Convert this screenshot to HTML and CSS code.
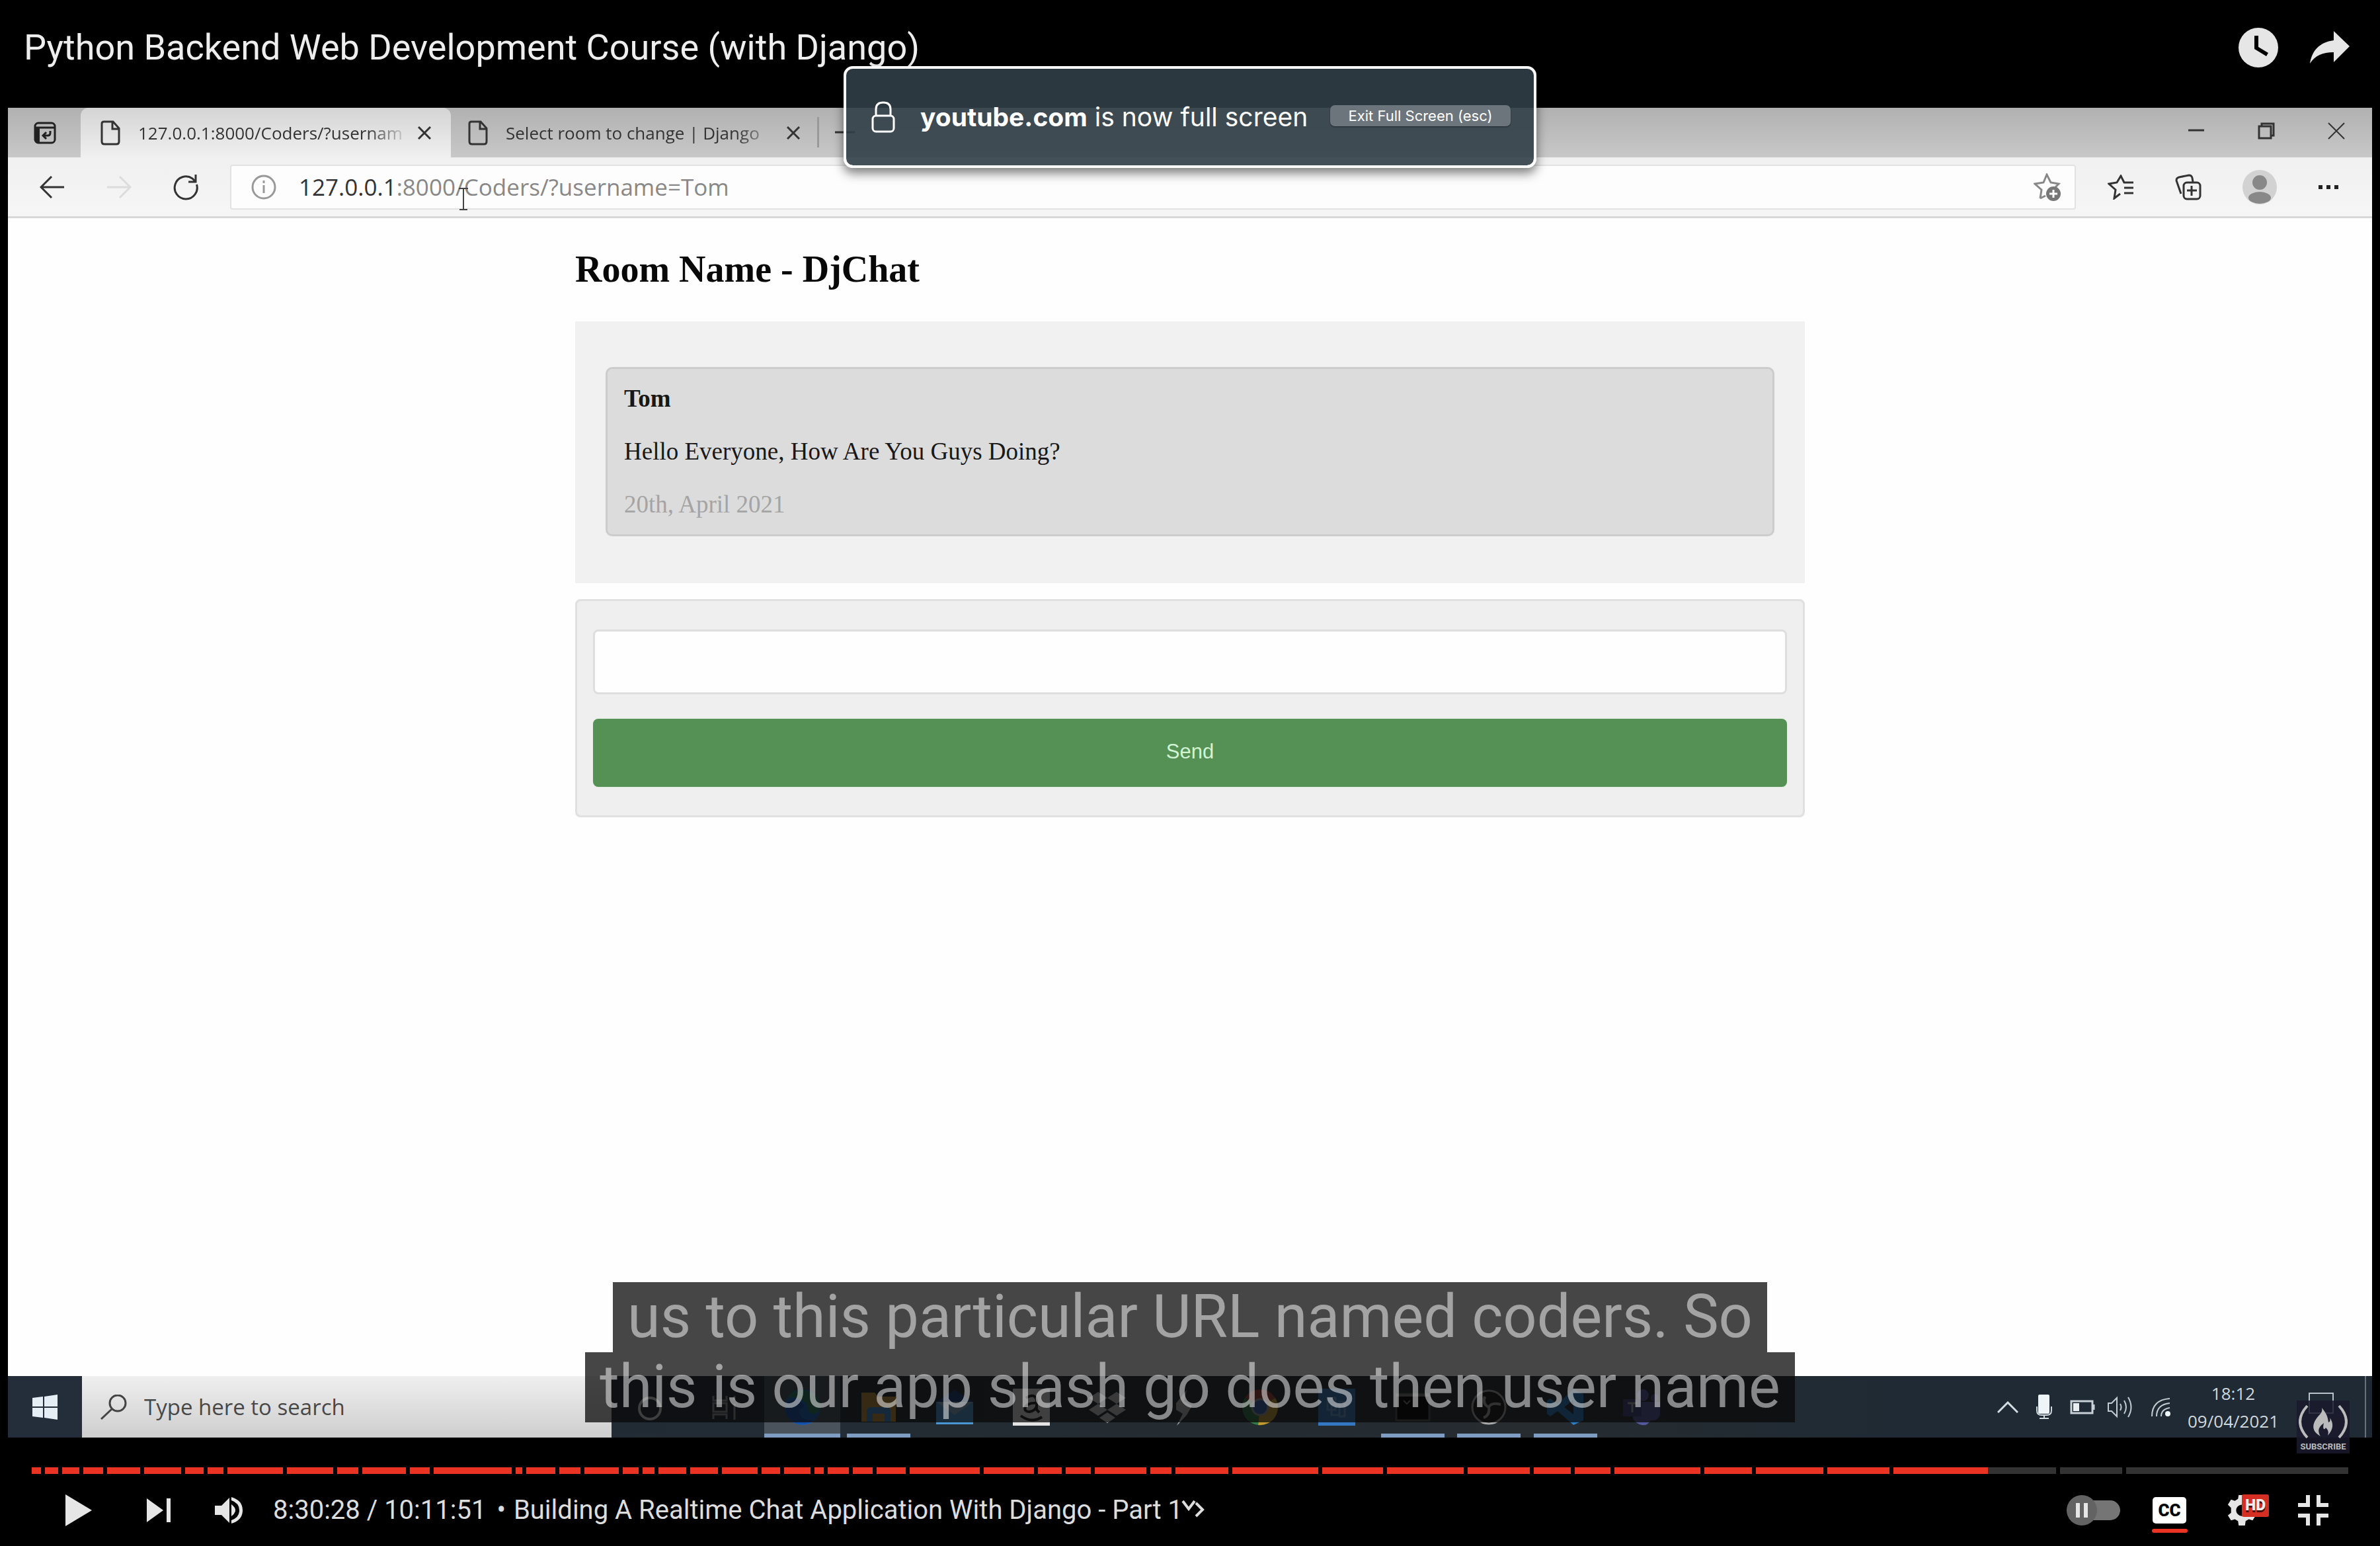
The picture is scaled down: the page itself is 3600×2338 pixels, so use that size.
FILE: index.html
```html
<!DOCTYPE html>
<html lang="en">
<head>
<meta charset="utf-8">
<title>Python Backend Web Development Course (with Django)</title>
<link rel="stylesheet" href="styles.css">
</head>
<body>
<div class="player">
  <header class="player-header">
    <h1 class="video-title">Python Backend Web Development Course (with Django)</h1>
    <button class="icon-button" aria-label="Watch later"><svg width="60" height="60" viewBox="0 0 60 60"><circle cx="30" cy="30" r="30" fill="#e6e6e6"/><path d="M24 12v20l18 11 3-5-15-9V12z" fill="#000"/></svg></button>
    <button class="icon-button" aria-label="Share"><svg width="60" height="60" viewBox="0 0 60 60"><path d="M60 28 36 5v14C14 22 3 35 0 54c8-12 19-17 36-17v15z" fill="#e6e6e6"/></svg></button>
  </header>

  <main class="video">
    <div class="tab-strip">
      <button class="tab-actions" aria-label="Tab actions"><svg width="34" height="34" viewBox="0 0 34 34"><rect x="2" y="2" width="30" height="30" rx="5" fill="none" stroke="#222" stroke-width="3"/><path d="M2 9h30" stroke="#222" stroke-width="3"/><path d="M2 9h7v23H6q-4 0-4-4z" fill="#222"/><path d="M25 14v3q0 4-4 4h-6m4-5-5 5 5 5" fill="none" stroke="#222" stroke-width="3"/></svg></button>
      <div class="tab tab-active">
        <svg class="page-icon" width="30" height="38" viewBox="0 0 30 38"><path d="M5 2h14l9 10v20q0 4-4 4H6q-4 0-4-4V5q0-3 3-3zM18 2v11h10" fill="none" stroke="#333" stroke-width="3"/></svg>
        <span class="tab-title">127.0.0.1:8000/Coders/?usernam</span>
        <button class="tab-close" aria-label="Close tab"><svg width="20" height="20" viewBox="0 0 20 20"><path d="m1 1 18 18M19 1 1 19" stroke="#333" stroke-width="3"/></svg></button>
      </div>
      <div class="tab">
        <svg class="page-icon" width="30" height="38" viewBox="0 0 30 38"><path d="M5 2h14l9 10v20q0 4-4 4H6q-4 0-4-4V5q0-3 3-3zM18 2v11h10" fill="none" stroke="#333" stroke-width="3"/></svg>
        <span class="tab-title">Select room to change | Django</span>
        <button class="tab-close" aria-label="Close tab"><svg width="20" height="20" viewBox="0 0 20 20"><path d="m1 1 18 18M19 1 1 19" stroke="#333" stroke-width="3"/></svg></button>
      </div>
      <button class="new-tab" aria-label="New tab"><svg width="30" height="30" viewBox="0 0 30 30"><path d="M0 15h30M15 0v30" stroke="#333" stroke-width="3"/></svg></button>
      <div class="window-controls">
        <button aria-label="Minimize"><svg width="26" height="26" viewBox="0 0 26 26"><path d="M1 12h24" stroke="#333" stroke-width="3"/></svg></button>
        <button aria-label="Restore"><svg width="26" height="26" viewBox="0 0 26 26"><path d="M2 6h18v18H2zM6 6V2h18v18h-4" fill="none" stroke="#333" stroke-width="3"/></svg></button>
        <button aria-label="Close"><svg width="26" height="26" viewBox="0 0 26 26"><path d="m1 1 24 24M25 1 1 25" stroke="#333" stroke-width="2"/></svg></button>
      </div>
    </div>

    <div class="toolbar">
      <div class="nav-buttons">
        <button aria-label="Back"><svg width="38" height="34" viewBox="0 0 38 34"><path d="M37 17H2M18 1 2 17l16 16" fill="none" stroke="#333" stroke-width="3"/></svg></button>
        <button aria-label="Forward"><svg width="38" height="34" viewBox="0 0 38 34"><path d="M1 17h35M20 1l16 16-16 16" fill="none" stroke="#dcdcdc" stroke-width="3"/></svg></button>
        <button aria-label="Reload"><svg width="38" height="40" viewBox="0 0 38 40"><path d="M35.500 16A17 17 0 1 1 29 7l4 4M34 1v11H23" fill="none" stroke="#333" stroke-width="3"/></svg></button>
      </div>
      <div class="address-bar">
        <svg width="38" height="38" viewBox="0 0 38 38"><circle cx="19" cy="19" r="17" fill="none" stroke="#999" stroke-width="3"/><path d="M19 16v12M19 9v4" stroke="#999" stroke-width="3"/></svg>
        <div class="url" role="textbox" aria-label="Address"><span class="url-host">127.0.0.1</span>:8000/Coders/?username=Tom</div>
        <button aria-label="Add to favorites"><svg width="42" height="42" viewBox="0 0 42 42"><path d="M10 38 12 25 2 16l13-2 5-12 6 12 12 2-5 5M10 38l8-4" fill="none" stroke="#888" stroke-width="3"/><circle cx="30" cy="31" r="11" fill="#777"/><path d="M30 25v12M24 31h12" stroke="#fff" stroke-width="3"/></svg></button>
        <svg class="text-cursor" width="16" height="36" viewBox="0 0 16 36"><path d="M1 2h14M8 2v32M2 34h12" stroke="#444" stroke-width="2"/></svg>
      </div>
      <div class="browser-actions">
        <button aria-label="Favorites"><svg width="40" height="38" viewBox="0 0 40 38"><path d="m19 29-9 7 2-13L2 14l12-2 6-10 5 10h14M25 20h14M25 28h14" fill="none" stroke="#333" stroke-width="3"/></svg></button>
        <button aria-label="Collections"><svg width="40" height="40" viewBox="0 0 40 40"><path d="M9 30 2 10q0-4 4-5l15-3q4 0 5 4l1 6" fill="none" stroke="#333" stroke-width="3"/><rect x="13" y="13" width="25" height="25" rx="5" fill="none" stroke="#333" stroke-width="3"/><path d="M25 18v15M18 25h15" stroke="#333" stroke-width="3"/></svg></button>
        <button aria-label="Profile"><svg width="52" height="52" viewBox="0 0 52 52"><circle cx="26" cy="26" r="26" fill="#d2d2d2"/><circle cx="26" cy="19" r="11" fill="#888"/><ellipse cx="26" cy="42" rx="17" ry="9" fill="#888"/></svg></button>
        <button aria-label="Settings and more"><svg width="32" height="8" viewBox="0 0 32 8"><path d="M1 1h6v6H1zM13 1h6v6h-6zM25 1h6v6h-6z" fill="#222"/></svg></button>
      </div>
    </div>

    <section class="page">
      <div class="chat">
        <h2 class="room-name">Room Name - DjChat</h2>
        <div class="chat-log">
          <article class="message">
            <b>Tom</b>
            <p>Hello Everyone, How Are You Guys Doing?</p>
            <time>20th, April 2021</time>
          </article>
        </div>
        <form class="chat-form">
          <input type="text" aria-label="Message">
          <button type="button">Send</button>
        </form>
      </div>
    </section>

    <div class="taskbar">
      <button class="start" aria-label="Start"><svg width="38" height="38" viewBox="0 0 38 38"><path d="m0 5 16-2v15H0zM18 3l20-3v18H18zM0 20h16v15L0 33zM18 20h20v18l-20-3z" fill="#e6eef5"/></svg></button>
      <label class="search">
        <svg width="40" height="38" viewBox="0 0 40 38"><circle cx="26" cy="13" r="12" fill="none" stroke="#444" stroke-width="3"/><path d="M17 22 1 37" stroke="#444" stroke-width="3"/></svg>
        <input type="text" placeholder="Type here to search" aria-label="Type here to search">
      </label>
      <div class="apps">
        <span class="app"><svg width="56" height="56" viewBox="0 0 56 56"><circle cx="28" cy="30" r="16" fill="none" stroke="#ddd" stroke-width="4"/></svg></span>
        <span class="app"><svg width="56" height="56" viewBox="0 0 56 56"><path d="M9 11v7h20v-7M9 46v-7h20v7M9 22h20v13H9zM41 11v6M41 23v24" fill="none" stroke="#999" stroke-width="3"/></svg></span>
        <span class="app app-open app-focused"><svg width="56" height="56" viewBox="0 0 56 56"><circle cx="28" cy="28" r="27" fill="#1464c0"/><path d="M5 14C20-6 52 0 55 28c0 10-16 14-19 4 2-12-15-22-31-18z" fill="#2a7a60"/><path d="M2 24c10-13 28-6 28 4-14 4-6 22 14 20C28 62 0 52 2 24z" fill="#1450a8"/></svg></span>
        <span class="app app-open"><svg width="56" height="56" viewBox="0 0 56 56"><path d="M2 6h20l5 6h27v38H2z" fill="#c09038"/><path d="M10 50V34q0-6 6-6h24q6 0 6 6v16h-9V38H19v12z" fill="#3c8cd0"/></svg></span>
        <span class="app"><svg width="56" height="56" viewBox="0 0 56 56"><path d="M0 20 28 2l28 18v34H0z" fill="#1a3f7c"/><path d="M0 20h56v34H0z" fill="#4a96d2"/><path d="m0 20 28 20 28-20z" fill="#88a8c8"/></svg></span>
        <span class="app"><svg width="56" height="56" viewBox="0 0 56 56"><path d="M0 0h56v56H0z" fill="#e4e4e4"/><path d="M20 14q14-8 16 4v14l4 4M36 22c-20-2-22 14-11 13q8-1 11-8M12 41q16 12 32 2" fill="none" stroke="#222" stroke-width="4"/></svg></span>
        <span class="app"><svg width="56" height="56" viewBox="0 0 56 56"><path d="m14 5 14 9-14 9L0 14zM42 5l14 9-14 9-14-9zM14 23l14 9-14 9L0 32zM42 23l14 9-14 9-14-9zM28 36l12 8-12 8-12-8z" fill="#ccc"/></svg></span>
        <span class="app"><svg width="56" height="56" viewBox="0 0 56 56"><path d="M32 2 16 22l0 10 10 6-9 18 15-16 8-14-12-7z" fill="#bbb"/></svg></span>
        <span class="app"><svg width="56" height="56" viewBox="0 0 56 56"><path d="M28 28 5 14a27 27 0 0 1 46 0z" fill="#a04030"/><path d="M28 28 5 14a27 27 0 0 0 20 41z" fill="#2f7a45"/><path d="M28 28 51 14a27 27 0 0 1-26 41z" fill="#c09a30"/><circle cx="28" cy="28" r="12" fill="#3a60b0" stroke="#999" stroke-width="3"/></svg></span>
        <span class="app"><svg width="56" height="56" viewBox="0 0 56 56"><path d="M0 0h56v56H0z" fill="#3478c4"/><path d="M14 14h12v18H14zM20 24h12v16H20zM32 20h8v22h-8z" fill="none" stroke="#6a9cd0" stroke-width="3"/></svg></span>
        <span class="app app-open"><svg width="56" height="56" viewBox="0 0 56 56"><path d="M3 8h50v40H3z" fill="#000" stroke="#555" stroke-width="3"/><path d="M3 10h50" stroke="#777" stroke-width="4"/><path d="m14 18 5 5 5-5" fill="none" stroke="#777" stroke-width="2"/></svg></span>
        <span class="app app-open"><svg width="56" height="56" viewBox="0 0 56 56"><circle cx="28" cy="28" r="25" fill="#181818" stroke="#aaa" stroke-width="3"/><path d="M22 12q-4 12 6 16 4-8 18-4M28 28q2 12-8 16" fill="none" stroke="#aaa" stroke-width="4"/></svg></span>
        <span class="app app-open"><svg width="56" height="56" viewBox="0 0 56 56"><path d="M40 1 55 8v40l-15 7L16 34 5 42 0 38V18l5-3 11 8zM40 17 26 28l14 11z" fill="#2a80c8" fill-rule="evenodd"/></svg></span>
        <span class="app"><svg width="56" height="56" viewBox="0 0 56 56"><circle cx="30" cy="10" r="9" fill="#565a9c"/><circle cx="48" cy="14" r="6" fill="#44488c"/><path d="M14 20h42v20q-4 10-14 8-6 9-14 7-14-4-14-16z" fill="#54589c"/><path d="M0 16h28v26H0z" fill="#3c4080"/><path d="M7 22h14M14 22v14" stroke="#aaa" stroke-width="3"/></svg></span>
      </div>
      <div class="tray">
        <svg width="32" height="18" viewBox="0 0 32 18"><path d="m1 17 15-15 15 15" fill="none" stroke="#d5dde2" stroke-width="3"/></svg>
        <svg width="26" height="38" viewBox="0 0 26 38"><rect x="4" width="17" height="29" rx="2" fill="#eef4f8"/><path d="M2 18v6q0 7 7 7h8q7 0 7-7v-6M13 31v5M6 36h14" fill="none" stroke="#cfd8dc" stroke-width="2"/></svg>
        <svg class="battery" width="38" height="22" viewBox="0 0 38 22"><path d="M2 2h32v18H2zM36 7v8" fill="none" stroke="#c8d0d5" stroke-width="3"/><path d="M5 5h9v12H5z" fill="#e8eef2"/></svg>
        <svg width="40" height="34" viewBox="0 0 40 34"><path d="M2 11h5l8-8v28l-8-8H2zM20 12q3 5 0 10M26 7q6 10 0 20M32 2q9 15 0 30" fill="none" stroke="#c4ccd1" stroke-width="2"/></svg>
        <svg width="30" height="30" viewBox="0 0 30 30"><path d="M2 29Q2 4 29 2M9 29Q9 11 29 9M16 29Q16 18 29 16" fill="none" stroke="#c4ccd1" stroke-width="2"/><circle cx="26" cy="25" r="4" fill="#eef4f8"/></svg>
        <time class="clock"><span>18:12</span><span>09/04/2021</span></time>
        <svg class="action-center" width="40" height="36" viewBox="0 0 40 36"><path d="M2 2h36v30H2z" fill="none" stroke="#b8c2c8" stroke-width="2"/></svg>
        <button class="show-desktop" aria-label="Show desktop"></button>
      </div>
      <a class="watermark" href="#"><svg width="74" height="52" viewBox="0 0 74 52"><path d="M13 2Q-9 26 13 50M61 2Q83 26 61 50" fill="none" stroke="#bbb" stroke-width="4"/><path d="M35 5c8 10 9 14 10 22 3-1 3-4 2-7 6 8 6 17-3 27 2-6 0-9-3-12-3 5-5 1-3-7-6 5-11 10-5 20C15 38 23 24 33 14c2-3 3-5 2-9z" fill="#bbb"/></svg>SUBSCRIBE</a>
    </div>

    <div class="captions"><span>us to this particular URL named coders. So</span><span>this is our app slash go does then user name</span></div>
  </main>

  <footer class="controls">
    <div class="progress" role="slider" aria-label="Seek" aria-valuemin="0" aria-valuemax="36711" aria-valuenow="30628" tabindex="0"><i style="flex-grow:14"></i><i style="flex-grow:20"></i><i style="flex-grow:26"></i><i style="flex-grow:30"></i><i style="flex-grow:50"></i><i style="flex-grow:56"></i><i style="flex-grow:28"></i><i style="flex-grow:24"></i><i style="flex-grow:84"></i><i style="flex-grow:70"></i><i style="flex-grow:32"></i><i style="flex-grow:66"></i><i style="flex-grow:30"></i><i style="flex-grow:118"></i><i style="flex-grow:10"></i><i style="flex-grow:44"></i><i style="flex-grow:32"></i><i style="flex-grow:52"></i><i style="flex-grow:24"></i><i style="flex-grow:18"></i><i style="flex-grow:42"></i><i style="flex-grow:42"></i><i style="flex-grow:54"></i><i style="flex-grow:28"></i><i style="flex-grow:40"></i><i style="flex-grow:14"></i><i style="flex-grow:32"></i><i style="flex-grow:30"></i><i style="flex-grow:44"></i><i style="flex-grow:106"></i><i style="flex-grow:76"></i><i style="flex-grow:36"></i><i style="flex-grow:38"></i><i style="flex-grow:78"></i><i style="flex-grow:32"></i><i style="flex-grow:80"></i><i style="flex-grow:130"></i><i style="flex-grow:92"></i><i style="flex-grow:116"></i><i style="flex-grow:94"></i><i style="flex-grow:56"></i><i style="flex-grow:54"></i><i style="flex-grow:130"></i><i style="flex-grow:72"></i><i style="flex-grow:102"></i><i style="flex-grow:94"></i><i class="playing" style="flex-grow:246"></i><i class="unplayed" style="flex-grow:94"></i><i class="unplayed" style="flex-grow:336"></i></div>
    <div class="control-row">
      <button class="play" aria-label="Play"><svg width="40" height="48" viewBox="0 0 40 48"><path d="m0 0 40 24L0 48z" fill="#e6e6e6"/></svg></button>
      <button class="next" aria-label="Next"><svg width="36" height="36" viewBox="0 0 36 36"><path d="m0 0 25 18L0 36zM30 0h6v36h-6z" fill="#e6e6e6"/></svg></button>
      <button class="volume" aria-label="Mute"><svg width="42" height="42" viewBox="0 0 42 42"><path d="M0 14h10L22 2v38L10 28H0z" fill="#e6e6e6"/><path d="M25 12q12 9 0 18zM25 1q17 5 17 20T25 41v-5q12-4 12-15T25 6z" fill="#e6e6e6"/></svg></button>
      <span class="time">8:30:28 / 10:11:51</span>
      <button class="chapter"><span>•</span><span>Building A Realtime Chat Application With Django - Part 1</span><svg width="36" height="30" viewBox="0 0 36 30"><path d="m2 2 9 12 9-12M22 5l10 10-10 10" fill="none" stroke="#ddd" stroke-width="4"/></svg></button>
      <div class="right-controls">
        <button aria-label="Autoplay"><svg width="82" height="46" viewBox="0 0 82 46"><rect x="20" y="8" width="61" height="30" rx="15" fill="#757575"/><circle cx="23" cy="23" r="23" fill="#636363"/><path d="M14 12h6v22h-6zM26 12h6v22h-6z" fill="#e6e6e6"/></svg></button>
        <button class="cc" aria-label="Subtitles">CC</button>
        <button class="settings" aria-label="Settings"><svg width="46" height="46" viewBox="0 0 48 48"><path fill-rule="evenodd" d="M19 0h10l1 6 5 3 6-2 5 8-5 5v8l5 4-5 8-6-2-5 3-1 7H19l-1-7-5-3-6 2-5-8 5-4v-8l-5-5 5-8 6 2 5-3zM24 15a9 9 0 1 0 0 18 9 9 0 0 0 0-18z" fill="#e6e6e6"/></svg><span class="hd">HD</span></button>
        <button aria-label="Exit full screen"><svg width="46" height="46" viewBox="0 0 46 46"><path d="M12 0h6v18H0v-6h12zM28 0h6v12h12v6H28zM0 28h18v18h-6V34H0zM28 28h18v6H34v12h-6z" fill="#e6e6e6"/></svg></button>
      </div>
    </div>
  </footer>

  <div class="fullscreen-notice" role="status">
    <svg width="36" height="48" viewBox="0 0 36 48"><path d="M7 22V12Q7 2 18 2t11 10v10" fill="none" stroke="#fff" stroke-width="3"/><rect x="2" y="22" width="32" height="24" rx="5" fill="none" stroke="#fff" stroke-width="3"/></svg>
    <p><b>youtube.com</b> is now full screen</p>
    <button>Exit Full Screen (esc)</button>
  </div>
</div>
</body>
</html>
```
FILE: styles.css
```css
* { box-sizing: border-box; }
body { margin: 0; background: #000; }
h1, h2, p { margin: 0; font-weight: 400; }
button { margin: 0; padding: 0; border: 0; background: none; color: inherit; font: inherit; cursor: pointer; }
svg { display: block; flex: none; }

.player { position: relative; display: flex; flex-direction: column; min-height: 100vh; font-family: Roboto, sans-serif; color: #ddd; }

/* Title row */
.player-header { display: flex; align-items: center; gap: 48px; height: 163px; padding: 0 46px 20px 36px; }
.video-title { flex: 1; font-size: 54px; line-height: 64px; color: #eee; }

/* Recorded desktop */
.video { position: relative; flex: 1; display: flex; flex-direction: column; margin: 0 12px; background: #fefefe; font-family: "Open Sans", sans-serif; color: #333; }

.tab-strip { display: flex; height: 75px; background: linear-gradient(#b1b1b1, #c8c8c8); }
.tab-actions { display: flex; align-items: center; justify-content: center; width: 110px; padding-left: 2px; }
.tab { display: flex; align-items: center; width: 554px; padding: 0 26px; font-size: 26px; }
.tab-active { width: 560px; padding: 0 30px; background: linear-gradient(#d4d4d4, #f0f0f0); border-radius: 12px 12px 0 0; }
.tab-title { flex: 1; margin: 0 20px 0 27px; overflow: hidden; white-space: nowrap; mask-image: linear-gradient(90deg, #000 86%, transparent 102%); }
.tab-close { width: 20px; }
.new-tab { display: flex; align-items: center; height: 46px; margin-top: 14px; padding-left: 24px; border-left: 3px solid #999; }
.window-controls { display: flex; align-items: center; gap: 80px; margin-left: auto; padding: 0 41px 5px 0; }

.toolbar { display: flex; align-items: center; height: 92px; background: linear-gradient(#f0f0f0, #f6f6f6); border-bottom: 3px solid #d8d8d8; }
.nav-buttons { display: flex; align-items: center; gap: 63px; padding: 0 48px; }
.address-bar { position: relative; flex: 1; display: flex; align-items: center; height: 68px; padding: 0 20px 0 30px; background: #fdfdfd; border: 2px solid #e2e2e2; border-radius: 4px; }
.url { flex: 1; margin-left: 34px; font-size: 35px; line-height: 46px; color: #888; }
.url-host { color: #333; }
.text-cursor { position: absolute; left: 343px; top: 32px; }
.browser-actions { display: flex; align-items: center; gap: 62px; padding: 0 50px 0 48px; }

/* Chat page */
.page { flex: 1; display: flex; justify-content: center; padding-top: 47px; font-family: "Liberation Serif", serif; color: #181818; }
.chat { width: 1860px; max-width: 100%; }
.room-name { font-size: 56px; line-height: 60px; font-weight: 700; color: #080808; }
.chat-log { margin-top: 49px; padding: 69px 46px 71px; background: #f1f1f1; }
.message { display: flex; flex-direction: column; padding: 5px 25px; border: 3px solid #ccc; border-radius: 10px; background: #dcdcdc; font-size: 37px; line-height: 80px; }
.message time { color: #a4a4a4; }
.chat-form { display: flex; flex-direction: column; gap: 37px; margin-top: 24px; padding: 43px 24px; border: 3px solid #e0e0e0; border-radius: 8px; background: #efefef; }
.chat-form input { height: 98px; border: 3px solid #dedede; border-radius: 8px; background: #fefefe; font-size: 30px; padding: 0 24px; }
.chat-form button { height: 103px; padding-bottom: 3px; border-radius: 8px; background: #559155; box-shadow: 0 0 2px #c8f0c8; color: #d0f4d4; font: 31px/36px "Liberation Sans", sans-serif; }

/* Taskbar */
.taskbar { position: relative; display: flex; height: 93px; background: linear-gradient(90deg, #1f2b38, #262c30 65%, #1f2a34 80%); color: #d0d8dd; }
.start { display: flex; align-items: center; justify-content: center; width: 112px; background: #232e3a; }
.search { display: flex; align-items: center; gap: 26px; width: 801px; padding: 0 28px; background: linear-gradient(#efefef, #cecece); }
.search input { flex: 1; border: 0; padding: 0; background: none; font: 33px/44px "Open Sans", sans-serif; color: #444; }
.search input::placeholder { color: #484848; opacity: 1; }
.apps { display: flex; width: 1616px; }
.app { flex: 1; display: flex; align-items: center; justify-content: center; }
.app-open { background: linear-gradient(#7f9cc2, #7f9cc2) center bottom / 96px 6px no-repeat; }
.app-focused { background: linear-gradient(#7f9cc2, #7f9cc2) center bottom / 100% 6px no-repeat, #4a535c; }
.tray { display: flex; align-items: center; gap: 26px; margin-left: auto; }
.battery { margin-right: -8px; }
.clock { display: flex; flex-direction: column; text-align: center; font-size: 26px; line-height: 42px; }
.action-center { margin: 0 20px 10px 18px; }
.show-desktop { align-self: stretch; width: 11px; border-left: 2px solid #65727a; }
.watermark { position: absolute; right: 34px; top: 37px; display: flex; flex-direction: column; align-items: center; gap: 3px; width: 80px; height: 80px; padding-top: 6px; background: rgba(26, 26, 46, .85); font: 700 13px/18px Roboto, sans-serif; color: #bbb; text-decoration: none; }

.captions { position: absolute; left: 0; right: 0; bottom: 23px; display: flex; flex-direction: column; align-items: center; font: 90px/106px Roboto, sans-serif; color: rgba(255, 255, 255, .5); }
.captions span { padding: 0 22px; background: rgba(8, 8, 8, .75); white-space: nowrap; }

/* Player controls */
.controls { height: 164px; padding: 45px 48px 0; }
.progress { display: flex; gap: 6px; height: 10px; }
.progress i { flex: 1 1 0; background: #eb3323; }
.progress .playing { background: linear-gradient(90deg, #eb3323 58%, #333 58%); }
.progress .unplayed { background: #333; }
.control-row { display: flex; align-items: center; height: 110px; padding: 0 30px 0 51px; font-size: 40px; line-height: 48px; }
.next { margin-left: 83px; }
.volume { margin-left: 67px; }
.time { margin-left: 46px; }
.chapter { display: flex; align-items: center; margin-left: 16px; gap: 12px; }
.chapter svg { margin: 0 0 2px -14px; }
.right-controls { display: flex; align-items: center; gap: 48px; margin-left: auto; }
.cc { position: relative; width: 51px; height: 40px; border-radius: 5px; background: #fff; color: #000; font-size: 26px; line-height: 40px; font-weight: 900; }
.cc::after { content: ""; position: absolute; left: -1px; right: -2px; bottom: -14px; height: 6px; border-radius: 3px; background: #eb3323; }
.settings { position: relative; margin: 0 14px 0 13px; }
.hd { position: absolute; left: 23px; top: -1px; width: 41px; height: 34px; border-radius: 3px; background: #d52e22; color: #eee; font-size: 23px; line-height: 34px; font-weight: 900; text-align: center; text-shadow: 0 3px #4a0a06; }

/* Browser full screen notice */
.fullscreen-notice { position: absolute; left: 50%; top: 100px; transform: translateX(-50%); display: flex; align-items: center; width: 1048px; height: 154px; padding: 0 35px 0 38px; border: 4px solid #fff; border-radius: 14px; background: rgba(49, 62, 71, .9); background-clip: padding-box; box-shadow: 0 8px 16px rgba(0, 0, 0, .5); color: #fff; font-family: Inter, sans-serif; }
.fullscreen-notice p { margin-left: 38px; font-size: 39px; line-height: 50px; white-space: nowrap; }
.fullscreen-notice button { width: 273px; height: 32px; margin: 0 0 4px auto; border-radius: 7px; background: #6c757c; box-shadow: 0 1px 2px rgba(0, 0, 0, .5); font-size: 22px; line-height: 30px; white-space: nowrap; }
```
